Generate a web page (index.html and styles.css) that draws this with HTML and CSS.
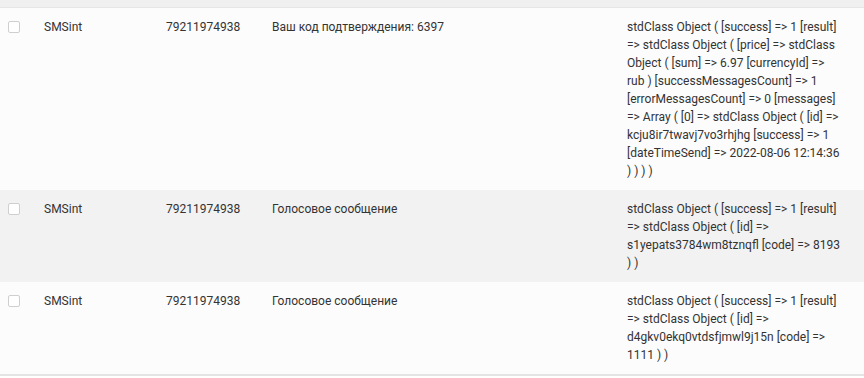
FILE: index.html
```html
<!DOCTYPE html>
<html lang="ru">
<head>
  <meta charset="UTF-8" />
  <meta name="viewport" content="width=device-width, initial-scale=1.0"/>
  <title>SMS лог</title>
  <link rel="stylesheet" href="styles.css">
</head>
<body>
  <div class="top-strip"></div>
  <table class="log">
    <colgroup>
      <col class="c-check">
      <col class="c-name">
      <col class="c-phone">
      <col class="c-text">
      <col class="c-resp">
    </colgroup>
    <tbody>
      <tr>
        <td><span class="check"></span></td>
        <td>SMSint</td>
        <td>79211974938</td>
        <td>Ваш код подтверждения: 6397</td>
        <td class="resp">stdClass Object ( [success] =&gt; 1 [result] =&gt; stdClass Object ( [price] =&gt; stdClass Object ( [sum] =&gt; 6.97 [currencyId] =&gt; rub ) [successMessagesCount] =&gt; 1 [errorMessagesCount] =&gt; 0 [messages] =&gt; Array ( [0] =&gt; stdClass Object ( [id] =&gt; kcju8ir7twavj7vo3rhjhg [success] =&gt; 1 [dateTimeSend] =&gt; 2022-08-06 12:14:36 ) ) ) )</td>
      </tr>
      <tr class="alt">
        <td><span class="check"></span></td>
        <td>SMSint</td>
        <td>79211974938</td>
        <td>Голосовое сообщение</td>
        <td class="resp">stdClass Object ( [success] =&gt; 1 [result] =&gt; stdClass Object ( [id] =&gt; s1yepats3784wm8tznqfl [code] =&gt; 8193 ) )</td>
      </tr>
      <tr>
        <td><span class="check"></span></td>
        <td>SMSint</td>
        <td>79211974938</td>
        <td>Голосовое сообщение</td>
        <td class="resp">stdClass Object ( [success] =&gt; 1 [result] =&gt; stdClass Object ( [id] =&gt; d4gkv0ekq0vtdsfjmwl9j15n [code] =&gt; 1111 ) )</td>
      </tr>
    </tbody>
  </table>
</body>
</html>
```

FILE: styles.css
```css
body {
  margin: 0;
  background-color: #ffffff;
  font-family: Roboto, "Liberation Sans", sans-serif;
  font-size: 12px;
  line-height: 18px;
  color: #333333;
}
.top-strip {
  height: 7px;
  background-color: #f0f0f0;
  border-bottom: 1px solid #e6e6e6;
}
.log {
  width: 864px;
  border-collapse: collapse;
  table-layout: fixed;
  border-bottom: 2px solid #e4e4e4;
}
.c-check { width: 36px; }
.c-name { width: 122px; }
.c-phone { width: 106px; }
.c-text { width: 355px; }
.c-resp { width: 245px; }
.log td {
  padding: 10px 8px;
  vertical-align: top;
  background-color: #fcfcfc;
}
.log td.resp {
  padding-right: 22px;
}
.log tr.alt td {
  background-color: #f2f2f2;
}
.check {
  display: block;
  width: 10px;
  height: 10px;
  margin-top: 3px;
  border: 1px solid #cfcfcf;
  border-radius: 2px;
  background-color: #ffffff;
}
```
